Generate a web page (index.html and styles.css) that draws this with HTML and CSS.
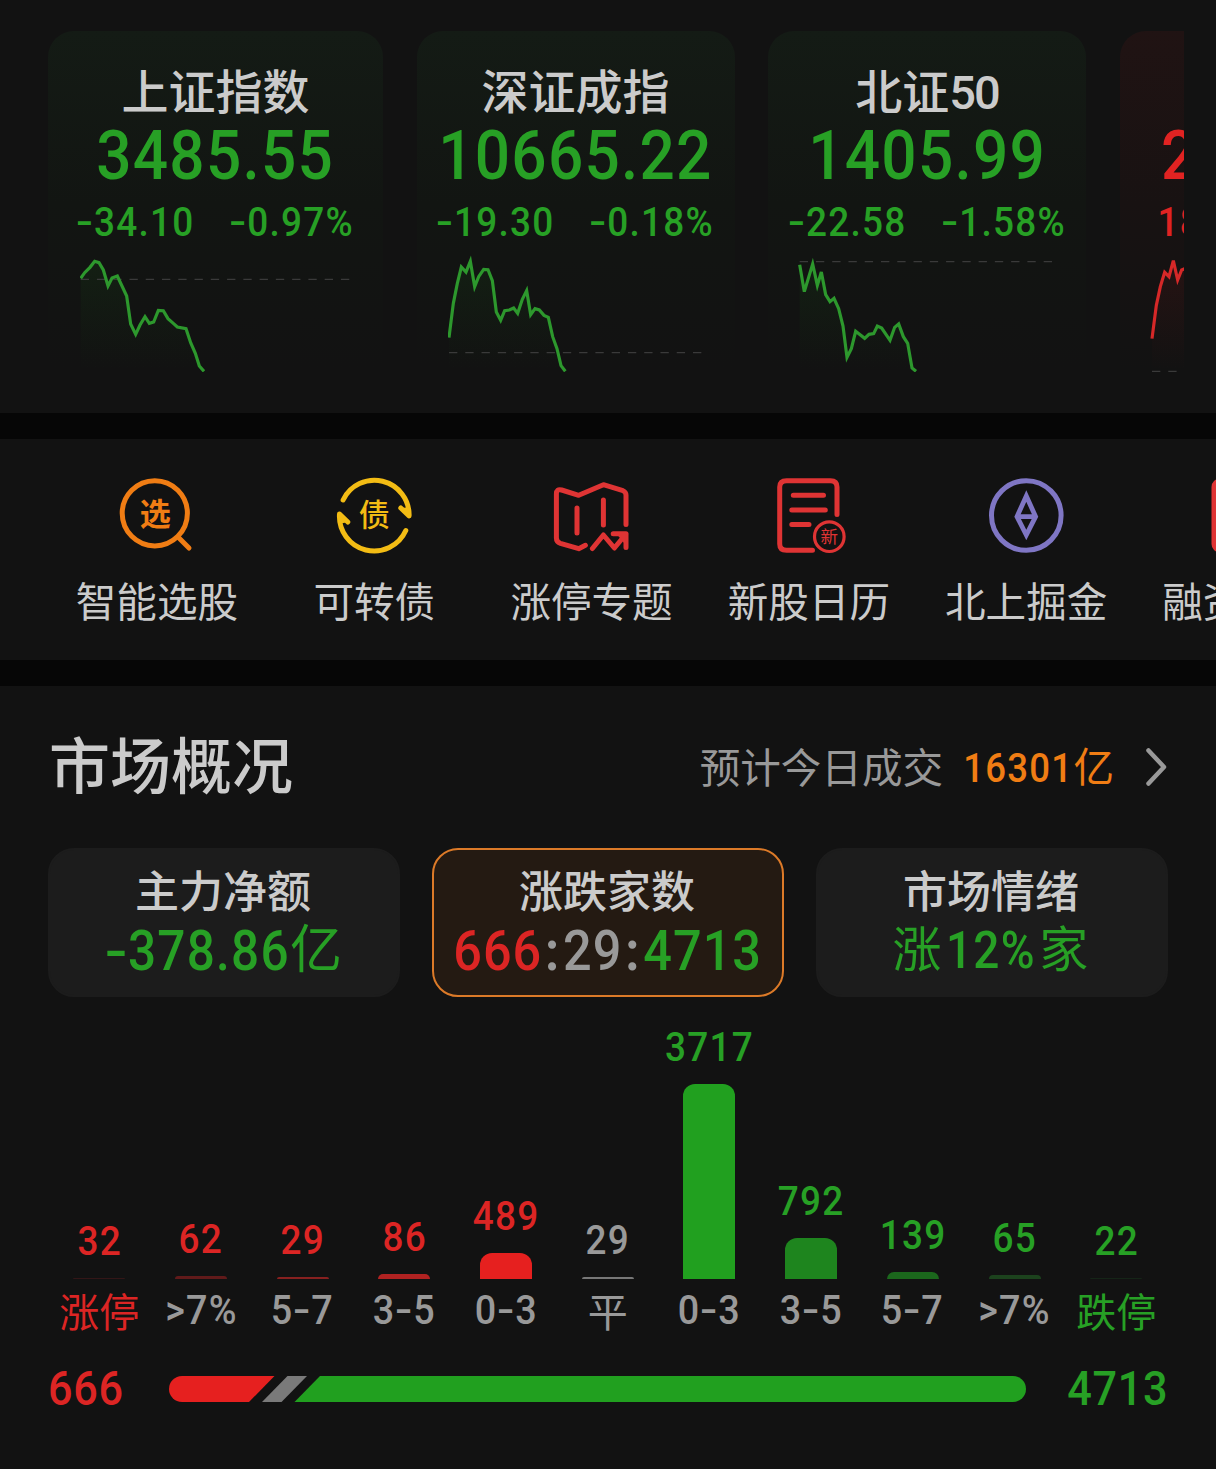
FILE: index.html
```html
<!DOCTYPE html>
<html lang="zh-CN">
<head>
<meta charset="utf-8">
<title>市场概况</title>
<link rel="stylesheet" href="styles.css">
</head>
<body>
<section class="indices">
  <div class="index-list">
    <article class="index-card wide">
      <h2 class="index-name">上证指数</h2>
      <div class="index-price"><span class="num">3485.55</span></div>
      <div class="index-change"><span class="num"><i class="dash">-</i>34.10</span><span class="num"><i class="dash">-</i>0.97%</span></div>
      <svg class="spark" width="271" height="120" viewBox="120 696 813 360">
        <defs><linearGradient id="fade-down" x1="0" y1="0" x2="0" y2="1"><stop offset="0" stop-color="#21a01f" stop-opacity=".08"/><stop offset="1" stop-color="#21a01f" stop-opacity="0"/></linearGradient>
        <linearGradient id="fade-up" x1="0" y1="0" x2="0" y2="1"><stop offset="0" stop-color="#e6201f" stop-opacity=".08"/><stop offset="1" stop-color="#e6201f" stop-opacity="0"/></linearGradient></defs>
        <path class="area" d="M122 1054V775L134 758 150 742 164 724 177 728 190 750 204 798 216 774 232 768 260 828 272 912 287 943 315 890 328 910 341 906 355 871 370 872 384 896 412 921 438 926 452 968 466 1000 478 1038 492 1054Z"/>
        <path class="base" d="M122 778H930"/>
        <path class="line" d="M122 775L134 758 150 742 164 724 177 728 190 750 204 798 216 774 232 768 260 828 272 912 287 943 300 915 315 890 328 910 341 906 355 871 370 872 384 896 400 910 412 921 438 926 452 968 466 1000 478 1038 492 1054"/>
      </svg>
    </article>
    <article class="index-card second">
      <h2 class="index-name">深证成指</h2>
      <div class="index-price"><span class="num">10665.22</span></div>
      <div class="index-change"><span class="num"><i class="dash">-</i>19.30</span><span class="num"><i class="dash">-</i>0.18%</span></div>
      <svg class="spark" width="258" height="120" viewBox="144 696 774 360">
        <path class="area" d="M147 1054V953L160 850 172 790 184 741 198 756 211 724 224 800 236 770 251 748 264 749 277 782 289 876 302 901 314 872 341 864 353 880 380 812 392 884 405 866 432 886 445 892 458 950 471 986 483 1037 496 1054Z"/>
        <path class="base" d="M147 998H905"/>
        <path class="line" d="M147 953L160 850 172 790 184 741 198 756 211 724 224 800 236 770 251 748 264 749 277 782 289 876 302 901 314 872 328 870 341 864 353 880 367 838 380 812 392 884 405 866 418 870 432 886 445 892 458 950 471 986 483 1037 496 1054"/>
      </svg>
    </article>
    <article class="index-card">
      <h2 class="index-name">北证<span class="name-num">50</span></h2>
      <div class="index-price"><span class="num">1405.99</span></div>
      <div class="index-change"><span class="num"><i class="dash">-</i>22.58</span><span class="num"><i class="dash">-</i>1.58%</span></div>
      <svg class="spark" width="258" height="120" viewBox="144 696 774 360">
        <path class="area" d="M149 1054V734L163 815 188 732 202 796 214 756 227 824 240 845 252 835 266 866 279 918 291 1012 304 986 317 934 344 955 371 941 382 918 395 924 420 961 434 922 446 912 460 950 473 970 486 1044 498 1054Z"/>
        <path class="base" d="M149 725H908"/>
        <path class="line" d="M149 734L163 815 188 732 202 796 214 756 227 824 240 845 252 835 266 866 279 918 291 1012 304 986 317 934 344 955 357 943 371 941 382 918 395 924 420 961 434 922 446 912 460 950 473 970 486 1044 498 1054"/>
      </svg>
    </article>
    <article class="index-card up cut">
      <h2 class="index-name"></h2>
      <div class="index-price"><span class="num">2</span></div>
      <div class="index-change"><span class="num">18</span></div>
      <svg class="spark" width="258" height="120" viewBox="1197 696 774 360">
        <path class="area up-area" d="M1203 1054V956L1216 856 1228 800 1241 757 1254 770 1267 722 1280 780 1292 750 1310 742V1054Z"/>
        <path class="base" d="M1203 1054H1310"/>
        <path class="line" d="M1203 956L1216 856 1228 800 1241 757 1254 770 1267 722 1280 780 1292 750 1310 742"/>
      </svg>
    </article>
  </div>
</section>

<nav class="tools">
  <a class="tool">
    <svg class="icon orange" viewBox="0 0 80 80"><circle cx="37.8" cy="37.3" r="32.6"/><path d="M61 61L72 72"/><text x="38.3" y="48.5" font-size="31" font-weight="700">选</text></svg>
    <span>智能选股</span>
  </a>
  <a class="tool">
    <svg class="icon yellow" viewBox="-.8 .5 80 80"><path d="M8.3 24.5A34.7 34.7 0 0 1 74.3 40.5L66 32.5M71 55A34.7 34.7 0 0 1 4.7 38.5L13 46.5"/><path class="solid" d="M74.3 40.5L66 32.5 72.5 32ZM4.7 38.500L13 46.5 6.5 48Z"/><text x="39.5" y="50" font-size="31" font-weight="500">债</text></svg>
    <span>可转债</span>
  </a>
  <a class="tool">
    <svg class="icon red" viewBox="1.3 0 80 80"><path d="M34.7 69.3L28 72.7 9.7 67.3Q5.7 66 5.7 62V18Q5.7 12.5 11 14L28 19.3 52.7 8.7 72.3 14.7Q75.3 16 75.3 19V48.5M26.3 32V57M52.7 24V49M41.7 72.5L52.7 59 63.7 72 75.3 58M62.5 57.7H75.3V71.5"/><path class="solid" d="M66 58H75V69Z"/></svg>
    <span>涨停专题</span>
  </a>
  <a class="tool">
    <svg class="icon red" viewBox="1 0 80 80"><path d="M69 38.5V11Q69 4.700 62.5 4.700H18.5Q11.7 4.700 11.7 11V68Q11.7 74.300 18.5 74.300H44.5M25.3 19.3H55.5M23.8 34H57.3M23.8 48.400H41"/><circle class="thin" cx="61.300" cy="60.700" r="14.800"/><text x="61.300" y="67" font-size="17.500">新</text></svg>
    <span>新股日历</span>
  </a>
  <a class="tool">
    <svg class="icon violet" viewBox="0 0 80 80"><circle cx="40.3" cy="39.5" r="34.8"/><path class="diamond" d="M40.3 20L49.6 40.6 40.3 59 31 40.6ZM31 40.6H49.6"/></svg>
    <span>北上掘金</span>
  </a>
  <a class="tool">
    <svg class="icon red" viewBox="0 0 80 80"><rect x="11" y="5" width="57" height="69" rx="6"/></svg>
    <span>融资融券</span>
  </a>
</nav>

<section class="market">
  <header class="market-head">
    <h1>市场概况</h1>
    <div class="turnover">
      <span class="turnover-label">预计今日成交</span>
      <span class="turnover-value"><span class="num">16301</span>亿</span>
      <svg width="24" height="42" viewBox="0 0 24 42"><path d="M4.500 4.500L20 21 4.500 37.500"/></svg>
    </div>
  </header>

  <div class="tabs">
    <div class="tab"><b>主力净额</b><div class="tab-value down"><span class="num"><i class="dash">-</i>378.86</span>亿</div></div>
    <div class="tab active"><b>涨跌家数</b><div class="tab-value ratio"><span class="num"><span class="rise">666</span><i class="colon">:</i>29<i class="colon">:</i><span class="down">4713</span></span></div></div>
    <div class="tab"><b>市场情绪</b><div class="tab-value mood down">涨<span class="num">12%</span>家</div></div>
  </div>

  <div class="chart">
    <div class="col rise"><span class="num">32</span><div class="bar" style="height:1px;background:#331617"></div><em>涨停</em></div>
    <div class="col rise"><span class="num">62</span><div class="bar" style="height:3px;background:#611a1a"></div><em class="flat"><span class="num">&gt;7%</span></em></div>
    <div class="col rise"><span class="num">29</span><div class="bar" style="height:1.5px;background:#87201f"></div><em class="flat"><span class="num">5<i class="dash">-</i>7</span></em></div>
    <div class="col rise"><span class="num">86</span><div class="bar" style="height:4.5px;background:#b02221"></div><em class="flat"><span class="num">3<i class="dash">-</i>5</span></em></div>
    <div class="col rise"><span class="num">489</span><div class="bar" style="height:25.5px;background:#e6201f"></div><em class="flat"><span class="num">0<i class="dash">-</i>3</span></em></div>
    <div class="col flat"><span class="num">29</span><div class="bar" style="height:1.5px;background:#777"></div><em>平</em></div>
    <div class="col down"><span class="num">3717</span><div class="bar" style="height:194.5px;background:#21a01f"></div><em class="flat"><span class="num">0<i class="dash">-</i>3</span></em></div>
    <div class="col down"><span class="num">792</span><div class="bar" style="height:41px;background:#1e851e"></div><em class="flat"><span class="num">3<i class="dash">-</i>5</span></em></div>
    <div class="col down"><span class="num">139</span><div class="bar" style="height:7px;background:#1b671c"></div><em class="flat"><span class="num">5<i class="dash">-</i>7</span></em></div>
    <div class="col down"><span class="num">65</span><div class="bar" style="height:3.5px;background:#1c421d"></div><em class="flat"><span class="num">&gt;7%</span></em></div>
    <div class="col down"><span class="num">22</span><div class="bar" style="height:1px;background:#152417"></div><em>跌停</em></div>
  </div>

  <div class="summary">
    <span class="num rise">666</span>
    <svg width="857" height="26" viewBox="0 0 857 26"><path fill="#e6201f" d="M13 0H105.5L80 26H13A13 13 0 0 1 13 0Z"/><path fill="#7a7a7a" d="M118.5 0H138L112.5 26H93Z"/><path fill="#21a01f" d="M151 0H844A13 13 0 0 1 844 26H125.5Z"/></svg>
    <span class="num down">4713</span>
  </div>
</section>
</body>
</html>
```

FILE: styles.css
```css
* { box-sizing: border-box; }

body {
  margin: 0;
  width: 1216px;
  height: 1469px;
  overflow: hidden;
  background: #060606;
  color: #cbcbcb;
  font-family: "Noto Sans CJK SC", sans-serif;
}

h1, h2 { margin: 0; font-weight: 500; }
i, em { font-style: normal; }

.num {
  display: inline-block;
  font-family: Roboto, "Noto Sans CJK SC", sans-serif;
  font-weight: 500;
  letter-spacing: 1.4px;
  transform: scaleX(.9);
}
.dash { display: inline-block; margin: 0 2px; transform: scaleX(1.35); }

.rise { color: #dc2524; }
.down { color: #27a025; }
.flat { color: #999; }

/* Index cards */
.indices { height: 413px; padding: 31px 32px 0 48px; background: #121212; }
.index-list { display: flex; gap: 33.5px; overflow: hidden; }
.index-card {
  flex: none;
  width: 318px;
  height: 345px;
  padding-top: 29px;
  border-radius: 26px 26px 0 0;
  background: linear-gradient(#141b15, #121512 50%, #121212 98%);
  color: #27a025;
  text-align: center;
}
.index-card.wide { width: 335px; }
.index-card.up { background: linear-gradient(#201313, #181212 50%, #121212 98%); color: #e02322; }
.index-name { height: 60px; line-height: 58px; font-size: 47px; color: #cbcbcb; }
.name-num { font-family: Roboto, sans-serif; font-size: 47px; letter-spacing: -2px; }
.index-price { height: 72px; line-height: 72px; font-size: 69px; font-family: Roboto, sans-serif; }
.index-change {
  display: flex;
  justify-content: center;
  gap: 22px;
  height: 60px;
  line-height: 60px;
  font-size: 41px;
}
.spark { display: block; margin-left: 30px; }
.wide .spark { margin-left: 32px; }
.second .spark { margin-left: 31.5px; }
.cut .index-price, .cut .index-change { justify-content: flex-start; padding-left: 39px; text-align: left; }
.cut .index-change { padding-left: 35px; }
.area { fill: url(#fade-down); }
.up-area { fill: url(#fade-up); }
.base { fill: none; stroke: #3a3a3a; stroke-width: 4; stroke-dasharray: 25 23.8; }
.line { fill: none; stroke: #2d982d; stroke-width: 9.5; }
.up .line { stroke: #d62828; }

/* Shortcuts */
.tools {
  display: flex;
  height: 221px;
  margin: 26px 0;
  padding: 37px 0 0 48.3px;
  overflow: hidden;
  background: #121212;
}
.tool { flex: none; display: flex; flex-direction: column; align-items: center; width: 217.3px; }
.tool span { height: 60px; margin-top: 14px; line-height: 60px; font-size: 40.6px; white-space: nowrap; }
.icon { width: 80px; height: 80px; fill: none; stroke: currentColor; stroke-width: 5; stroke-linecap: round; stroke-linejoin: round; }
.icon text { fill: currentColor; stroke: none; text-anchor: middle; }
.icon .solid { fill: currentColor; stroke: none; }
.icon .thin { stroke-width: 3.2; }
.icon .diamond { stroke-width: 4.8; stroke-linejoin: miter; stroke-linecap: butt; }
.orange { color: #f07d14; }
.yellow { color: #f3bc14; }
.red { color: #df3434; }
.violet { color: #7f76c4; }

/* Market overview */
.market { height: 783px; padding: 0 48px; background: #121212; }
.market-head { display: flex; justify-content: space-between; align-items: center; height: 162px; }
h1 { font-size: 61px; line-height: 80px; padding: 0 0 9px 1px; }
.turnover { display: flex; align-items: center; font-size: 40.6px; line-height: 60px; padding-bottom: 2px; }
.turnover-label { color: #999; }
.turnover-value { margin: 0 30px 0 20px; color: #f07d14; }
.turnover-value .num { margin-left: -12px; transform-origin: right; }
.turnover svg { fill: none; stroke: #999; stroke-width: 4.5; stroke-linecap: round; stroke-linejoin: round; margin-top: 2px; }

.tabs { display: grid; grid-template-columns: repeat(3, 1fr); gap: 32px; }
.tab {
  height: 149px;
  padding-top: 12px;
  border: 2px solid #1c1c1c;
  border-radius: 26px;
  background: #1c1c1c;
  text-align: center;
}
.tab.active { border-color: #dc7a28; background: #241a12; }
.tab b { display: block; height: 54px; line-height: 54px; font-size: 44px; font-weight: 500; margin-left: -2px; }
.tab-value { display: flex; justify-content: center; height: 64px; margin-top: -2px; line-height: 64px; font-size: 52px; }
.tab-value .num { font-size: 55px; margin: 0 -10px; transform: translateY(5px) scaleX(.9); }
.tab-value.ratio { color: #999; }
.ratio .num { font-size: 56px; letter-spacing: 1.2px; }
.colon { display: inline-block; margin: 0 3px; font-weight: 700; }
.tab-value.mood { font-size: 49px; margin-left: -3px; }
.mood .num { font-size: 51px; margin: 0 -1px; }

.chart { display: grid; grid-template-columns: repeat(11, 101.7px); align-items: end; height: 343.7px; margin-left: .5px; }
.col { display: flex; flex-direction: column; align-items: center; font-size: 41px; }
.col > .num { line-height: 48px; margin-bottom: 13px; }
.bar { width: 52px; border-radius: 12px 12px 0 0; }
.col em { height: 62px; line-height: 62px; font-size: 40px; white-space: nowrap; }
.col em .num { font-size: 41px; transform: translateY(-3px) scaleX(.92); }

.summary { display: flex; align-items: center; height: 60px; margin-top: 18.3px; font-size: 48px; line-height: 60px; }
.summary svg { flex: none; margin: 0 auto 0 120.5px; }
.summary .num { letter-spacing: .8px; }
.summary .rise { width: 0; transform-origin: left; }
.summary .down { transform-origin: right; }
```
